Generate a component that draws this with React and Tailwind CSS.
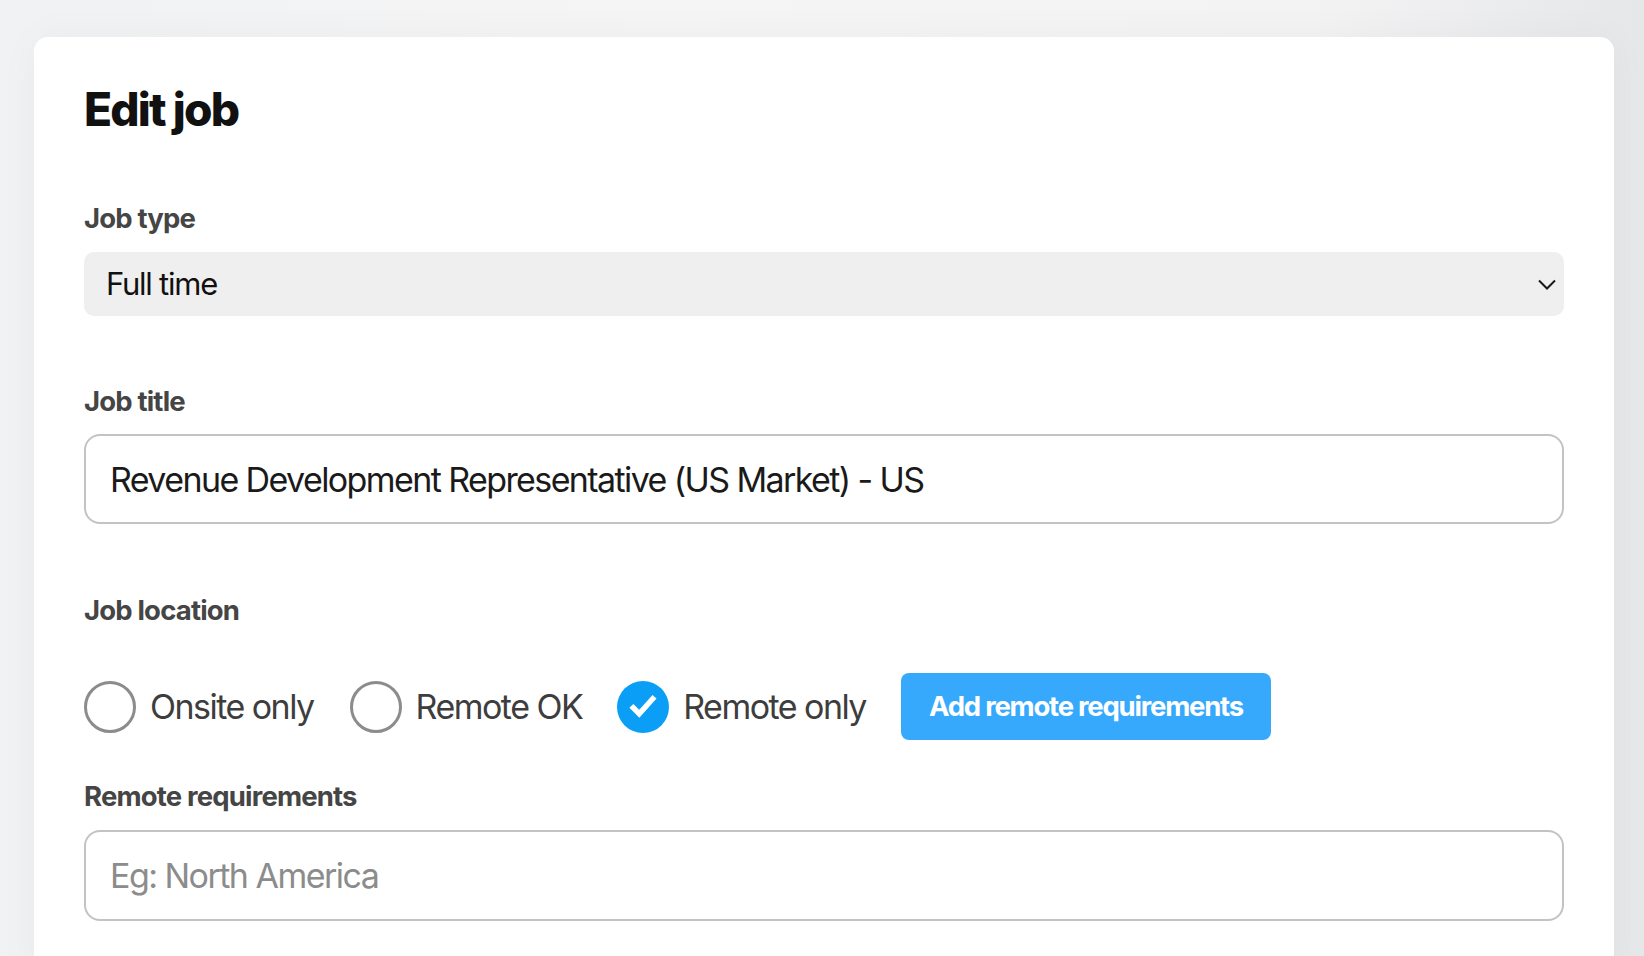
import React from "react";

const font = { fontFamily: "Inter, 'Noto Sans', sans-serif" };

function Radio({ checked, label }) {
  return (
    <div className="flex items-center gap-[14px]">
      {checked ? (
        <div className="w-[52px] h-[52px] rounded-full bg-[#0a9ef7] flex items-center justify-center">
          <svg width="36" height="36" viewBox="0 0 24 24" fill="none" stroke="white" strokeWidth="3.6" strokeLinecap="square">
            <path d="M5.5 12.5l4 4L18.5 6.5" />
          </svg>
        </div>
      ) : (
        <div className="w-[52px] h-[52px] rounded-full border-[3px] border-[#8c8c8c] bg-white" />
      )}
      <span className="text-[34px] text-[#3d3d3d] tracking-[-0.045em] leading-none">{label}</span>
    </div>
  );
}

function Label({ children, className = "" }) {
  return (
    <div className={"h-8 pt-[3px] flex items-center text-[27.5px] font-bold text-[#454545] tracking-[-0.03em] " + className}>
      {children}
    </div>
  );
}

export default function App() {
  return (
    <div className="min-h-[956px] w-full bg-[linear-gradient(90deg,#f1f2f3_0%,#f5f5f6_40%,#f3f3f4_80%,#e6e7e9_100%)] overflow-hidden" style={font}>
      <div className="pt-[37px] pl-[34px] pr-[30px]">
        <div className="bg-white rounded-t-[14px] px-[50px] pt-[46px] pb-[60px] shadow-[0_0_40px_rgba(0,0,0,0.04)]">
          <h1 className="h-[52px] leading-[52px] text-[46px] font-extrabold text-[#111] tracking-[-0.04em]">Edit job</h1>

          <Label className="mt-[66px]">Job type</Label>
          <div className="mt-[19px] h-[64px] rounded-[10px] bg-[#efefef] flex items-center justify-between pl-[22px] pr-[8px]">
            <span className="text-[31px] text-[#111] tracking-[-0.04em]">Full time</span>
            <svg width="18" height="11" viewBox="0 0 18 11" fill="none" stroke="#1a1a1a" strokeWidth="2">
              <path d="M1 1.5l8 8 8-8" />
            </svg>
          </div>

          <Label className="mt-[68px]">Job title</Label>
          <div className="mt-[18px] h-[90px] rounded-[16px] border-2 border-[#c3c3c3] flex items-center pl-[24px]">
            <span className="text-[34px] text-[#1a1a1a] tracking-[-0.047em]">Revenue Development Representative (US Market) - US</span>
          </div>

          <Label className="mt-[69px]">Job location</Label>
          <div className="mt-[48px] flex items-center">
            <Radio label="Onsite only" />
            <div className="w-[36px]" />
            <Radio label="Remote OK" />
            <div className="w-[35px]" />
            <Radio checked label="Remote only" />
            <button className="ml-[35px] h-[67px] w-[370px] rounded-[8px] bg-[#36a9fd] text-white text-[27.5px] font-bold tracking-[-0.045em]">
              Add remote requirements
            </button>
          </div>

          <Label className="mt-[39px]">Remote requirements</Label>
          <div className="mt-[19px] h-[91px] rounded-[16px] border-2 border-[#c3c3c3] flex items-center pl-[24px]">
            <span className="text-[34px] text-[#8c8c8c] tracking-[-0.045em]">Eg: North America</span>
          </div>
        </div>
      </div>
    </div>
  );
}
